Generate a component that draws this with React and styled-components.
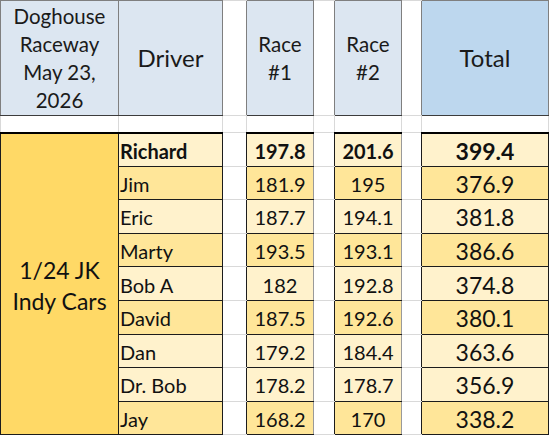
import React from "react";
import styled, { createGlobalStyle, css } from "styled-components";

const GlobalStyle = createGlobalStyle`
  html, body {
    margin: 0;
    padding: 0;
    background: #ffffff;
  }
  body {
    font-family: Lato, "Open Sans", sans-serif;
    color: #111111;
  }
`;

const LIGHT = "#fff2cc";
const DARK = "#ffe699";
const GRID = "#d9d9d9";

const Sheet = styled.table`
  border-collapse: collapse;
  table-layout: fixed;
  width: 548px;
  font-family: Lato, "Open Sans", sans-serif;
`;

const HeadRow = styled.tr`
  height: 115px;
`;

const SpacerRow = styled.tr`
  height: 17px;
`;

const DataRow = styled.tr`
  height: 33.6px;
`;

const HeadCell = styled.th`
  background: ${(p) => (p.$strong ? "#bdd7ee" : "#dce6f1")};
  border: 1px solid #7f7f7f;
  border-bottom-color: #3c3c3c;
  font-weight: 400;
  font-size: ${(p) => p.$size || 20}px;
  line-height: ${(p) => p.$lh || 28}px;
  text-align: center;
  vertical-align: middle;
  padding: 0 1px;
  color: #1a1a1a;
`;

const GapCell = styled.td`
  background: #ffffff;
  border: 1px solid ${GRID};
  border-left: none;
  border-right: none;
  padding: 0;
`;

const BlankCell = styled.td`
  background: #ffffff;
  border: 1px solid ${GRID};
  padding: 0;
`;

const dataBorder = css`
  border: 1px solid #1c1c1c;
  ${(p) =>
    p.$first &&
    css`
      border-top: 2px solid #000000;
    `}
`;

const ClassCell = styled.td`
  background: #ffd966;
  border: 1px solid #1c1c1c;
  border-top: 2px solid #000000;
  text-align: center;
  vertical-align: middle;
  font-size: 23px;
  line-height: 31px;
  padding: 4px 0 0;
`;

const NameCell = styled.td`
  ${dataBorder};
  background: ${(p) => (p.$dark ? DARK : LIGHT)};
  font-size: 20px;
  line-height: 24px;
  font-weight: ${(p) => (p.$bold ? 700 : 400)};
  text-align: left;
  vertical-align: middle;
  padding: 2px 1px 0;
  white-space: nowrap;
  overflow: hidden;
`;

const RaceCell = styled.td`
  ${dataBorder};
  border-right-color: #9a9a9a;
  background: ${(p) => (p.$dark ? DARK : LIGHT)};
  font-size: 20px;
  line-height: 24px;
  font-weight: ${(p) => (p.$bold ? 700 : 400)};
  text-align: center;
  vertical-align: middle;
  padding: 2px 0 0;
`;

const TotalCell = styled.td`
  ${dataBorder};
  background: ${(p) => (p.$dark ? DARK : LIGHT)};
  font-size: 23px;
  line-height: 24px;
  font-weight: ${(p) => (p.$bold ? 700 : 400)};
  text-align: center;
  vertical-align: middle;
  padding: 2px 0 0;
`;

const results = [
  { name: "Richard", r1: "197.8", r2: "201.6", total: "399.4", bold: true, dark: false },
  { name: "Jim", r1: "181.9", r2: "195", total: "376.9", dark: true },
  { name: "Eric", r1: "187.7", r2: "194.1", total: "381.8", dark: false },
  { name: "Marty", r1: "193.5", r2: "193.1", total: "386.6", dark: true },
  { name: "Bob A", r1: "182", r2: "192.8", total: "374.8", dark: false },
  { name: "David", r1: "187.5", r2: "192.6", total: "380.1", dark: true },
  { name: "Dan", r1: "179.2", r2: "184.4", total: "363.6", dark: false },
  { name: "Dr. Bob", r1: "178.2", r2: "178.7", total: "356.9", dark: false },
  { name: "Jay", r1: "168.2", r2: "170", total: "338.2", dark: true },
];

export default function App() {
  return (
    <>
      <GlobalStyle />
      <Sheet>
        <colgroup>
          <col style={{ width: 118 }} />
          <col style={{ width: 104 }} />
          <col style={{ width: 24 }} />
          <col style={{ width: 67 }} />
          <col style={{ width: 21 }} />
          <col style={{ width: 67 }} />
          <col style={{ width: 20 }} />
          <col style={{ width: 127 }} />
        </colgroup>
        <thead>
          <HeadRow>
            <HeadCell $size={20.5}>
              Doghouse
              <br />
              Raceway
              <br />
              May 23,
              <br />
              2026
            </HeadCell>
            <HeadCell $size={24}>Driver</HeadCell>
            <GapCell />
            <HeadCell $size={20.5}>
              Race
              <br />
              #1
            </HeadCell>
            <GapCell />
            <HeadCell $size={20.5}>
              Race
              <br />
              #2
            </HeadCell>
            <GapCell />
            <HeadCell $strong $size={24}>
              Total
            </HeadCell>
          </HeadRow>
        </thead>
        <tbody>
          <SpacerRow>
            <BlankCell />
            <BlankCell />
            <BlankCell />
            <BlankCell />
            <BlankCell />
            <BlankCell />
            <BlankCell />
            <BlankCell />
          </SpacerRow>
          {results.map((r, i) => (
            <DataRow key={r.name}>
              {i === 0 && (
                <ClassCell rowSpan={results.length}>
                  1/24 JK
                  <br />
                  Indy Cars
                </ClassCell>
              )}
              <NameCell $first={i === 0} $dark={r.dark} $bold={r.bold}>
                {r.name}
              </NameCell>
              <GapCell />
              <RaceCell $first={i === 0} $dark={r.dark} $bold={r.bold}>
                {r.r1}
              </RaceCell>
              <GapCell />
              <RaceCell $first={i === 0} $dark={r.dark} $bold={r.bold}>
                {r.r2}
              </RaceCell>
              <GapCell />
              <TotalCell $first={i === 0} $dark={r.dark} $bold={r.bold}>
                {r.total}
              </TotalCell>
            </DataRow>
          ))}
        </tbody>
      </Sheet>
    </>
  );
}
